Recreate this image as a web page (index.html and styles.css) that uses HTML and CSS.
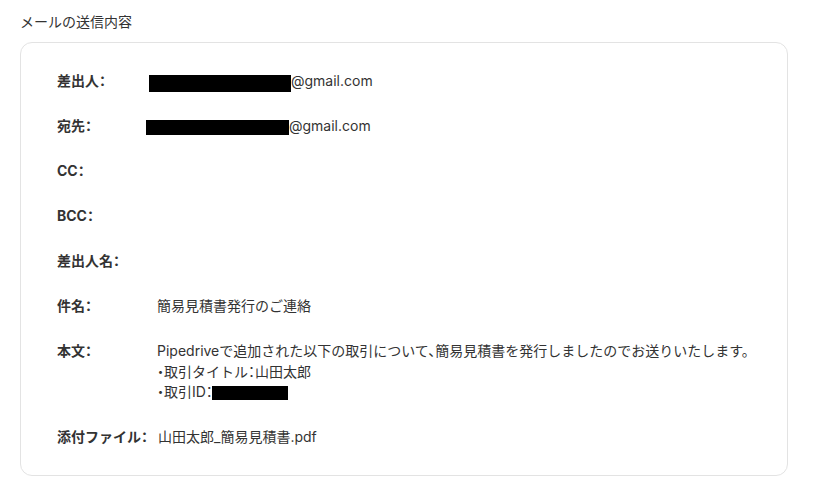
FILE: index.html
```html
<!DOCTYPE html>
<html lang="ja">
<head>
<meta charset="utf-8">
<link rel="stylesheet" href="styles.css">
</head>
<body>
<div class="page">
  <h2 class="title">メールの送信内容</h2>
  <div class="card">
    <div class="row"><div class="label">差出人：</div><div class="value"><span class="redact r1"></span>@gmail.com</div></div>
    <div class="row"><div class="label">宛先：</div><div class="value"><span class="redact r2"></span>@gmail.com</div></div>
    <div class="row"><div class="label">CC：</div><div class="value"></div></div>
    <div class="row"><div class="label">BCC：</div><div class="value"></div></div>
    <div class="row"><div class="label">差出人名：</div><div class="value"></div></div>
    <div class="row"><div class="label">件名：</div><div class="value">簡易見積書発行のご連絡</div></div>
    <div class="row"><div class="label">本文：</div><div class="value">Pipedriveで追加された以下の取引について、簡易見積書を発行しましたのでお送りいたします。<br>・取引タイトル：山田太郎<br>・取引ID：<span class="redact r3"></span></div></div>
    <div class="row"><div class="label">添付ファイル：</div><div class="value">山田太郎_簡易見積書.pdf</div></div>
  </div>
</div>
</body>
</html>
```
FILE: styles.css
```css
html, body {
  margin: 0;
  padding: 0;
  background: #ffffff;
}
body {
  font-family: "Inter", "Noto Sans CJK JP", sans-serif;
  font-feature-settings: "halt";
  color: #333333;
  font-size: 14px;
}
.page {
  padding: 12px 37px 0 20px;
}
.title {
  margin: 0 0 10px 0;
  font-size: 14px;
  font-weight: 400;
  line-height: 20px;
  color: #333333;
}
.card {
  border: 1px solid #e3e3e3;
  border-radius: 12px;
  padding: 28px 36px 27px 36px;
  display: flex;
  flex-direction: column;
  gap: 24.5px;
}
.row {
  display: flex;
  column-gap: 10px;
  line-height: 20.5px;
  min-height: 20.5px;
}
.label {
  flex: none;
  min-width: 90px;
  white-space: nowrap;
  font-weight: 700;
  color: #333333;
}
.value {
  flex: 1;
  color: #333333;
}
.redact {
  display: inline-block;
  background: #000000;
  vertical-align: middle;
}
.r1 {
  width: 142px;
  height: 17px;
  margin-left: -8px;
  position: relative;
  top: 1px;
}
.r2 {
  width: 143px;
  height: 15px;
  margin-left: -11px;
}
.r3 {
  width: 76px;
  height: 14px;
  margin-left: -1px;
}
```
